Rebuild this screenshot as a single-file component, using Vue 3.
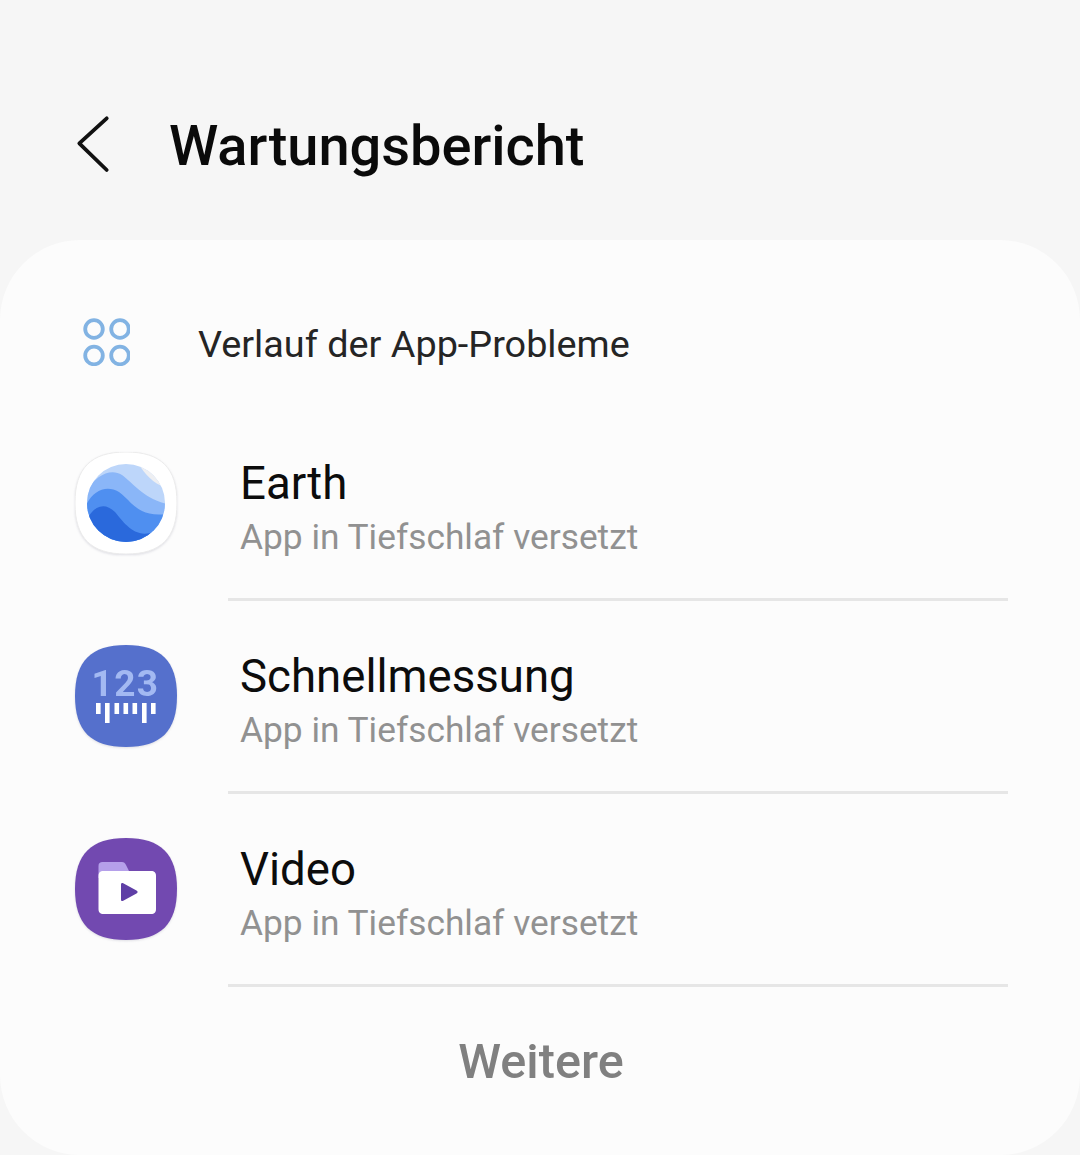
<template>
  <div class="page">
    <header class="top">
      <svg class="back" width="36" height="60" viewBox="0 0 36 60">
        <path d="M30.7 3.3 3.300 28.300 30.700 55" fill="none" stroke="#111" stroke-width="3.800" stroke-linecap="round" stroke-linejoin="round" />
      </svg>
      <h1>Wartungsbericht</h1>
    </header>

    <main class="card">
      <div class="history">
        <svg class="history-icon" width="50" height="50" viewBox="0 0 50 50">
          <g fill="none" stroke="#82b3e3" stroke-width="3.8">
            <circle cx="14" cy="13" r="8.8" />
            <circle cx="40" cy="13" r="8.8" />
            <circle cx="14" cy="39.5" r="8.8" />
            <circle cx="40" cy="39.5" r="8.8" />
          </g>
        </svg>
        <span>Verlauf der App-Probleme</span>
      </div>

      <div v-for="app in apps" :key="app.name" class="row">
        <div class="row-body">
          <svg v-if="app.icon === 'earth'" class="app-icon" viewBox="0 0 102 102">
            <defs>
              <clipPath id="globe"><circle cx="51" cy="51" r="39" /></clipPath>
            </defs>
            <path :d="squircle" fill="#fff" stroke="#ececec" stroke-width="1" />
            <g clip-path="url(#globe)">
              <rect width="102" height="102" fill="#bdd6fa" />
              <path d="M62 10C70 22 78 32 92 36V10Z" fill="#eeeff2" />
              <path d="M10 42C18 26 34 15 47 23C58 31 68 46 92 52V102H10Z" fill="#8ab6f8" />
              <path d="M10 56C16 40 30 32 44 40C56 48 62 66 92 62V102H10Z" fill="#4f8ff0" />
              <path d="M10 72C16 56 28 48 40 60C50 72 66 96 92 70V102H10Z" fill="#2a69dc" />
            </g>
          </svg>

          <svg v-else-if="app.icon === 'measure'" class="app-icon" viewBox="0 0 102 102">
            <path :d="squircle" fill="#5570cc" />
            <text x="50.5" y="51" text-anchor="middle" class="digits">123</text>
            <g fill="#fff">
              <rect v-for="tick in ticks" :key="tick.x" :x="tick.x" y="58" width="4.6" :height="tick.h" />
            </g>
          </svg>

          <svg v-else class="app-icon" viewBox="0 0 102 102">
            <path :d="squircle" fill="#7249b0" />
            <path d="M23.5 36V28C23.5 25 25 24 27.5 24H47C49 24 50 25 51 27L54 33V40H23.5Z" fill="#b5a0ea" />
            <path d="M23.5 38C23.5 34.500 25 33 28.500 33H76C79.500 33 81 34.500 81 38V71C81 74.500 79.500 76 76 76H28.500C25 76 23.5 74.500 23.500 71Z" fill="#fff" />
            <path d="M46 46.500C46 45 47 44.500 48.200 45.200L61.500 52.500C63 53.500 63 54.500 61.500 55.500L48.200 62.800C47 63.500 46 63 46 61.500Z" fill="#5f3fa6" />
          </svg>

          <div class="texts">
            <div class="name">{{ app.name }}</div>
            <div class="status">{{ app.status }}</div>
          </div>
        </div>
        <div class="divider"></div>
      </div>

      <div class="more">Weitere</div>
    </main>
  </div>
</template>

<script setup>
const squircle = 'M51 0C86 0 102 16 102 51C102 86 86 102 51 102C16 102 0 86 0 51C0 16 16 0 51 0Z'

const apps = [
  { name: 'Earth', status: 'App in Tiefschlaf versetzt', icon: 'earth' },
  { name: 'Schnellmessung', status: 'App in Tiefschlaf versetzt', icon: 'measure' },
  { name: 'Video', status: 'App in Tiefschlaf versetzt', icon: 'video' }
]

const ticks = [
  { x: 21, h: 11 },
  { x: 30, h: 20 },
  { x: 39.500, h: 11 },
  { x: 48.500, h: 11 },
  { x: 57.500, h: 11 },
  { x: 67, h: 20 },
  { x: 76, h: 11 }
]
</script>

<style>
html,
body {
  margin: 0;
  background: #f6f6f6;
}
</style>

<style scoped>
.page {
  width: 1080px;
  height: 1155px;
  overflow: hidden;
  font-family: Roboto, "Liberation Sans", sans-serif;
  background: #f6f6f6;
}
.top {
  height: 240px;
  box-sizing: border-box;
  display: flex;
  align-items: center;
  padding: 50px 0 0 76px;
  margin: 0;
}
.back {
  margin-top: -1px;
}
.top h1 {
  margin: 2px 0 0 57px;
  font-size: 56px;
  font-weight: 500;
  color: #0a0a0a;
  letter-spacing: -0.03px;
}
.card {
  height: 915px;
  background: #fcfcfc;
  border-radius: 80px;
}
.history {
  height: 168px;
  box-sizing: border-box;
  display: flex;
  align-items: center;
  padding-left: 80px;
  padding-top: 40px;
}
.history-icon {
  margin-top: -7px;
}
.history span {
  margin-left: 68px;
  font-size: 37.8px;
  color: #252525;
}
.row-body {
  height: 190px;
  display: flex;
  align-items: center;
  padding-left: 75px;
}
.app-icon {
  width: 102px;
  height: 102px;
  flex: none;
  filter: drop-shadow(0 1px 1px rgba(90, 90, 120, 0.18));
}
.digits {
  font-family: Roboto, sans-serif;
  font-size: 37px;
  font-weight: 700;
  letter-spacing: 1.4px;
  fill: #a3b9f2;
}
.texts {
  margin-left: 63px;
  padding-top: 13px;
}
.name {
  font-size: 45.6px;
  line-height: 54px;
  color: #0c0c0c;
  position: relative;
  top: 1px;
}
.status {
  margin-top: 3px;
  font-size: 35.3px;
  line-height: 50px;
  color: #919191;
  position: relative;
  top: -1px;
}
.divider {
  height: 3px;
  margin: 0 72px 0 228px;
  background: #e6e6e6;
}
.more {
  text-align: center;
  padding-top: 47px;
  padding-left: 2px;
  font-size: 48.6px;
  font-weight: 500;
  line-height: 56px;
  color: #808080;
}
</style>
